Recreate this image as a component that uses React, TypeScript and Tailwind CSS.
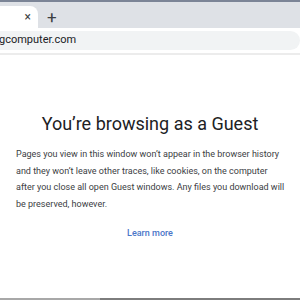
export default function App() {
  return (
    <div className="w-[300px] h-[300px] overflow-hidden bg-white flex flex-col font-['Roboto',sans-serif]">
      {/* tab strip */}
      <div className="h-[2px] bg-[#7b8496]" />
      <div className="h-[26px] bg-[#dee1e6] flex items-end">
        <div className="w-[38px] h-[22px] bg-white rounded-tr-[8px] flex items-center justify-end pr-[7px] text-[12px] text-[#3c4043]">
          ×
        </div>
        <div className="ml-[9px] h-[22px] flex items-center text-[17px] leading-none text-[#3c4043]">+</div>
      </div>
      {/* address bar */}
      <div className="h-[25px] bg-white pt-[3px] pb-[3px]">
        <div className="h-full bg-[#f1f3f4] rounded-r-full flex items-center text-[11px] text-[#202124] -ml-px">
          gcomputer.com
        </div>
      </div>
      <div className="h-[2px] bg-[#ececec]" />
      {/* content */}
      <div className="flex-1 flex flex-col items-center">
        <h1 className="mt-[55px] text-[18px] leading-[28px] text-[#202124]">You’re browsing as a Guest</h1>
        <p className="mt-[8px] self-stretch pl-[16px] pr-[12px] text-[9px] leading-[16.5px] text-[#3c4043]">
          Pages you view in this window won’t appear in the browser history and they won’t leave other traces, like cookies, on the computer after you close all open Guest windows. Any files you download will be preserved, however.
        </p>
        <a className="mt-[14px] text-[9px] leading-[15px] font-medium text-[#4a76c8]">Learn more</a>
      </div>
      <div className="h-[2px] flex">
        <div className="w-[100px] bg-[#a8a8a8]" />
        <div className="flex-1 bg-[#7d7d7d]" />
      </div>
    </div>
  );
}
